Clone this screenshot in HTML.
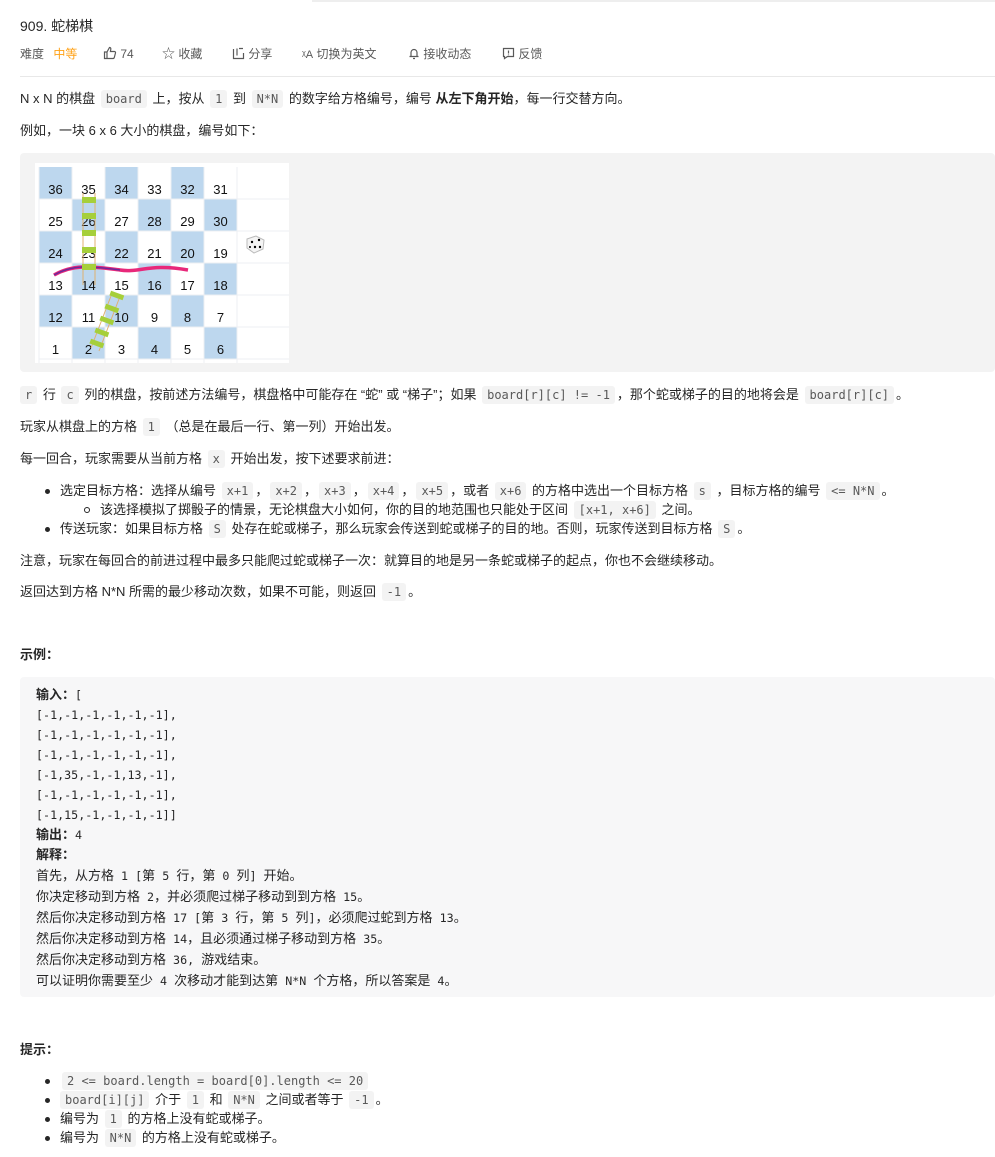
<!DOCTYPE html>
<html><head><meta charset="utf-8"><style>
*{margin:0;padding:0;box-sizing:border-box}
body{width:995px;height:1157px;background:#fff;position:relative;overflow:hidden;font-family:"Liberation Sans","Noto Sans CJK SC",sans-serif;font-size:13px;color:#262626}
.l{position:absolute;left:20px;height:20px;line-height:20px;white-space:nowrap}
code{font-family:"DejaVu Sans Mono","Liberation Mono",monospace;font-size:12px;background:#f3f3f3;color:#595959;padding:2px 5px;border-radius:3px;margin:0 2px}
b{font-weight:bold;color:#262626}
.tb{position:absolute;top:45px;font-size:12px;color:#595959;line-height:18px}
.dot{position:absolute;width:5px;height:5px;border-radius:50%;background:#262626}
.circ{position:absolute;width:6px;height:6px;border-radius:50%;border:1px solid #262626}
pre{position:absolute;left:20px;top:677px;width:975px;height:320px;background:#f7f7f8;border-radius:4px;padding:8px 16px;font-family:"DejaVu Sans Mono","Noto Sans CJK SC",monospace;font-size:11.7px;line-height:20px;color:#262626}
pre b{font-family:"Liberation Sans","Noto Sans CJK SC",sans-serif;font-size:13px}
pre i{font-style:normal;font-family:"Noto Sans CJK SC",sans-serif;font-size:13px}
.cell{position:absolute;width:33px;height:32px;text-align:center;font-size:13px;line-height:20px;padding-top:13px;color:#111}
.bl{background:#bdd7ee}
</style></head><body>
<div style="position:absolute;left:312px;top:0;width:683px;height:2px;background:#eee"></div>
<div class="l" style="top:16px;font-size:14px;color:#262626">909. 蛇梯棋</div>
<div class="tb" style="left:20px">难度 <span style="color:#ffa116;margin-left:6px">中等</span></div>
<div class="tb" style="left:103px"><svg width="14" height="14" viewBox="0 0 14 14" style="vertical-align:-2px" fill="none" stroke="#595959" stroke-width="1.2"><path d="M1.5 6h2.5v6.5H1.5zM4 6l2.5-4.5c1 0 1.5.7 1.3 1.8L7.4 5.5h4c.8 0 1.3.7 1.1 1.4l-1.2 4.6c-.2.6-.6 1-1.2 1H4"/></svg> 74</div>
<div class="tb" style="left:162px"><span style="font-size:13px">☆</span> 收藏</div>
<div class="tb" style="left:232px"><svg width="13" height="13" viewBox="0 0 13 13" style="vertical-align:-2px" fill="none" stroke="#595959" stroke-width="1.2"><path d="M1.5 2v9.5h10V6M5 1.5v7M7 1.5h4"/></svg> 分享</div>
<div class="tb" style="left:302px"><span style="font-size:11px">ᵡA</span> 切换为英文</div>
<div class="tb" style="left:408px"><svg width="12" height="13" viewBox="0 0 12 13" style="vertical-align:-2px" fill="none" stroke="#595959" stroke-width="1.2"><path d="M3 9V5.5a3 3 0 016 0V9M1.5 9.5h9M5 11.5h2"/></svg> 接收动态</div>
<div class="tb" style="left:502px"><svg width="13" height="13" viewBox="0 0 13 13" style="vertical-align:-2px" fill="none" stroke="#595959" stroke-width="1.2"><path d="M1.5 1.5h10v8h-6l-3 2v-2h-1zM6.5 3.5v3M6.5 7.5v.8"/></svg> 反馈</div>
<div style="position:absolute;left:20px;top:76px;width:975px;height:1px;background:#e8e8e8"></div>

<div class="l" style="top:89px">N x N 的棋盘 <code>board</code> 上，按从 <code>1</code> 到 <code>N*N</code> 的数字给方格编号，编号 <b>从左下角开始</b>，每一行交替方向。</div>
<div class="l" style="top:121px">例如，一块 6 x 6 大小的棋盘，编号如下：</div>

<div style="position:absolute;left:20px;top:153px;width:975px;height:219px;background:#f3f3f3;border-radius:4px"></div>
<div style="position:absolute;left:35px;top:163px;width:254px;height:200px;background:#fff;overflow:hidden">
<div class="cell bl" style="left:4px;top:4px">36</div><div class="cell" style="left:37px;top:4px">35</div><div class="cell bl" style="left:70px;top:4px">34</div><div class="cell" style="left:103px;top:4px">33</div><div class="cell bl" style="left:136px;top:4px">32</div><div class="cell" style="left:169px;top:4px">31</div>
<div class="cell" style="left:4px;top:36px">25</div><div class="cell bl" style="left:37px;top:36px">26</div><div class="cell" style="left:70px;top:36px">27</div><div class="cell bl" style="left:103px;top:36px">28</div><div class="cell" style="left:136px;top:36px">29</div><div class="cell bl" style="left:169px;top:36px">30</div>
<div class="cell bl" style="left:4px;top:68px">24</div><div class="cell" style="left:37px;top:68px">23</div><div class="cell bl" style="left:70px;top:68px">22</div><div class="cell" style="left:103px;top:68px">21</div><div class="cell bl" style="left:136px;top:68px">20</div><div class="cell" style="left:169px;top:68px">19</div>
<div class="cell" style="left:4px;top:100px">13</div><div class="cell bl" style="left:37px;top:100px">14</div><div class="cell" style="left:70px;top:100px">15</div><div class="cell bl" style="left:103px;top:100px">16</div><div class="cell" style="left:136px;top:100px">17</div><div class="cell bl" style="left:169px;top:100px">18</div>
<div class="cell bl" style="left:4px;top:132px">12</div><div class="cell" style="left:37px;top:132px">11</div><div class="cell bl" style="left:70px;top:132px">10</div><div class="cell" style="left:103px;top:132px">9</div><div class="cell bl" style="left:136px;top:132px">8</div><div class="cell" style="left:169px;top:132px">7</div>
<div class="cell" style="left:4px;top:164px">1</div><div class="cell bl" style="left:37px;top:164px">2</div><div class="cell" style="left:70px;top:164px">3</div><div class="cell bl" style="left:103px;top:164px">4</div><div class="cell" style="left:136px;top:164px">5</div><div class="cell bl" style="left:169px;top:164px">6</div>
<svg width="254" height="200" style="position:absolute;left:0;top:0">
<g stroke="#eceff3" stroke-width="1"><path d="M4 4V200M37 4V200M70 4V200M103 4V200M136 4V200M169 4V200M202 4V200M4 36H254M4 68H254M4 100H254M4 132H254M4 164H254M4 196H254"/></g>
<path d="M19 112C40 100 60 104 85 107C105 110 115 100 153 107" stroke="#e8287a" stroke-width="3.5" fill="none"/>
<path d="M19 112C40 100 60 104 85 107" stroke="#6a2a9a" stroke-width="1.5" fill="none"/>
<g stroke="#e0b070" stroke-width="1"><path d="M48 30V122M60 30V122M56 185L76 133M64 188L84 136"/></g>
<g fill="#a6cf3a"><rect x="47" y="34" width="14" height="6"/><rect x="47" y="50" width="14" height="6"/><rect x="47" y="67" width="14" height="6"/><rect x="47" y="84" width="14" height="6"/><rect x="47" y="101" width="14" height="6"/>
<rect x="75" y="130" width="14" height="5" transform="rotate(20 82 132)"/><rect x="70" y="143" width="14" height="5" transform="rotate(20 77 145)"/><rect x="65" y="155" width="14" height="5" transform="rotate(20 72 157)"/><rect x="60" y="167" width="14" height="5" transform="rotate(20 67 169)"/><rect x="55" y="178" width="14" height="5" transform="rotate(20 62 180)"/></g>
<g transform="translate(210 72)"><path d="M2 4L11 1L19 5L18 14L9 18L2 13Z" fill="#f4f4f4" stroke="#bbb"/><circle cx="7" cy="7" r="1.2"/><circle cx="14" cy="5" r="1.2"/><circle cx="10" cy="12" r="1.2"/><circle cx="15" cy="12" r="1.2"/><circle cx="5" cy="12" r="1"/></g>
</svg>
</div>

<div class="l" style="top:385px"><code style="margin-left:0">r</code> 行 <code>c</code> 列的棋盘，按前述方法编号，棋盘格中可能存在 “蛇” 或 “梯子”；如果 <code>board[r][c] != -1</code>，那个蛇或梯子的目的地将会是 <code>board[r][c]</code>。</div>
<div class="l" style="top:417px">玩家从棋盘上的方格 <code>1</code> （总是在最后一行、第一列）开始出发。</div>
<div class="l" style="top:449px">每一回合，玩家需要从当前方格 <code>x</code> 开始出发，按下述要求前进：</div>
<div class="l" style="top:481px;left:60px">选定目标方格：选择从编号 <code>x+1</code>，<code>x+2</code>，<code>x+3</code>，<code>x+4</code>，<code>x+5</code>，或者 <code>x+6</code> 的方格中选出一个目标方格 <code>s</code> ，目标方格的编号 <code>&lt;= N*N</code>。</div>
<div class="dot" style="left:45px;top:489px"></div>
<div class="l" style="top:500px;left:100px">该选择模拟了掷骰子的情景，无论棋盘大小如何，你的目的地范围也只能处于区间 <code>[x+1, x+6]</code> 之间。</div>
<div class="circ" style="left:84px;top:507px"></div>
<div class="l" style="top:519px;left:60px">传送玩家：如果目标方格 <code>S</code> 处存在蛇或梯子，那么玩家会传送到蛇或梯子的目的地。否则，玩家传送到目标方格 <code>S</code>。</div>
<div class="dot" style="left:45px;top:527px"></div>
<div class="l" style="top:551px">注意，玩家在每回合的前进过程中最多只能爬过蛇或梯子一次：就算目的地是另一条蛇或梯子的起点，你也不会继续移动。</div>
<div class="l" style="top:582px">返回达到方格 N*N 所需的最少移动次数，如果不可能，则返回 <code>-1</code>。</div>
<div class="l" style="top:645px"><b>示例：</b></div>
<pre><b>输入：</b>[
[-1,-1,-1,-1,-1,-1],
[-1,-1,-1,-1,-1,-1],
[-1,-1,-1,-1,-1,-1],
[-1,35,-1,-1,13,-1],
[-1,-1,-1,-1,-1,-1],
[-1,15,-1,-1,-1,-1]]
<b>输出：</b>4
<b>解释：</b>
<i>首先，从方格</i> 1 [<i>第</i> 5 <i>行，第</i> 0 <i>列</i>] <i>开始。</i>
<i>你决定移动到方格</i> 2<i>，并必须爬过梯子移动到到方格</i> 15<i>。</i>
<i>然后你决定移动到方格</i> 17 [<i>第</i> 3 <i>行，第</i> 5 <i>列</i>]<i>，必须爬过蛇到方格</i> 13<i>。</i>
<i>然后你决定移动到方格</i> 14<i>，且必须通过梯子移动到方格</i> 35<i>。</i>
<i>然后你决定移动到方格</i> 36, <i>游戏结束。</i>
<i>可以证明你需要至少</i> 4 <i>次移动才能到达第</i> N*N <i>个方格，所以答案是</i> 4<i>。</i></pre>
<div class="l" style="top:1040px"><b>提示：</b></div>
<div class="l" style="top:1071px;left:60px"><code>2 &lt;= board.length = board[0].length &lt;= 20</code></div>
<div class="dot" style="left:45px;top:1079px"></div>
<div class="l" style="top:1090px;left:60px"><code style="margin-left:0">board[i][j]</code> 介于 <code>1</code> 和 <code>N*N</code> 之间或者等于 <code>-1</code>。</div>
<div class="dot" style="left:45px;top:1098px"></div>
<div class="l" style="top:1109px;left:60px">编号为 <code>1</code> 的方格上没有蛇或梯子。</div>
<div class="dot" style="left:45px;top:1117px"></div>
<div class="l" style="top:1128px;left:60px">编号为 <code>N*N</code> 的方格上没有蛇或梯子。</div>
<div class="dot" style="left:45px;top:1136px"></div>
</body></html>
